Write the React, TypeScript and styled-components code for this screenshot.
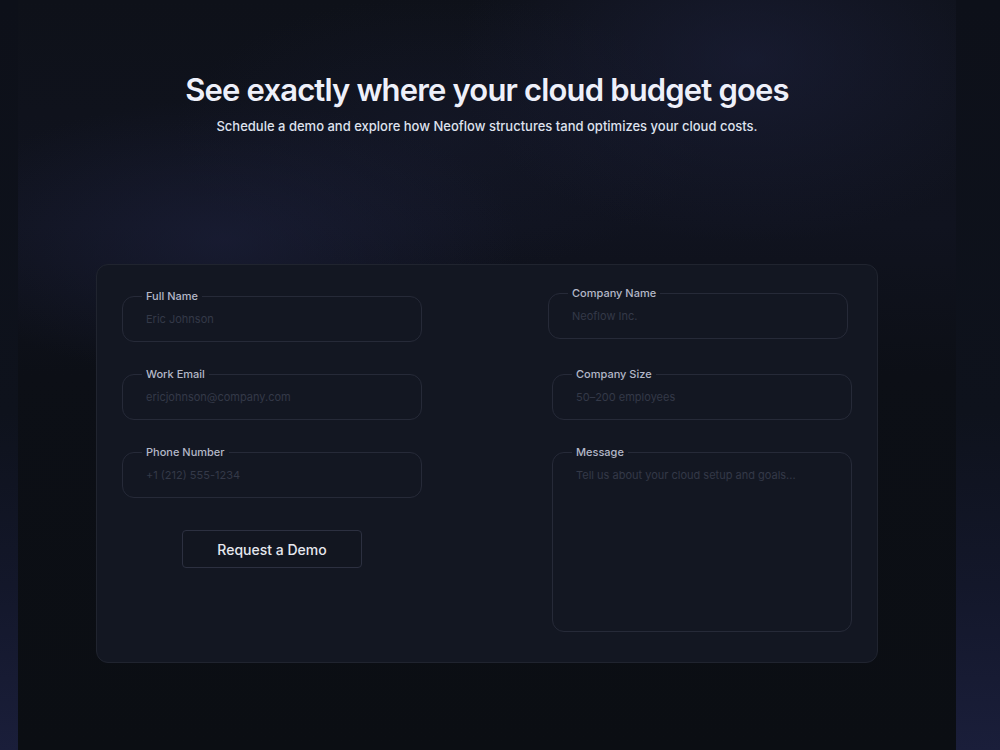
import styled, { createGlobalStyle } from "styled-components";

const GlobalStyle = createGlobalStyle`
  * { box-sizing: border-box; }
  body {
    margin: 0;
    font-family: Inter, "Noto Sans", "Liberation Sans", sans-serif;
    background: linear-gradient(to bottom, #0d1019 0%, #0e121c 55%, #13172a 78%, #1a1e3a 100%);
  }
`;

const Page = styled.div`
  display: flex;
  min-height: 750px;
  padding-left: 18px;
`;

const Column = styled.main`
  width: 938px;
  min-height: 750px;
  display: flex;
  flex-direction: column;
  align-items: center;
  background:
    radial-gradient(ellipse 420px 260px at 78% 8%, rgba(30, 34, 64, 0.55), transparent 70%),
    radial-gradient(ellipse 420px 200px at 22% 32%, rgba(30, 34, 64, 0.55), transparent 70%),
    radial-gradient(ellipse 380px 200px at 45% 18%, rgba(26, 30, 54, 0.35), transparent 70%),
    linear-gradient(to bottom, #0e1119 0%, #10131f 30%, #0c0f16 50%, #0b0e13 100%);
`;

const Title = styled.h1`
  margin: 72px 0 0;
  font-size: 31px;
  line-height: 36px;
  font-weight: 600;
  letter-spacing: -0.027em;
  color: #eef0fa;
`;

const Subtitle = styled.p`
  margin: 9px 0 0;
  font-size: 13px;
  line-height: 18px;
  font-weight: 500;
  color: #dfe2ee;
`;

const Card = styled.form`
  margin-top: 129px;
  width: 782px;
  padding: 24px 25px 30px;
  border: 1px solid #20242f;
  border-radius: 12px;
  background: #131722;
  display: grid;
  grid-template-columns: 300px 300px;
  justify-content: space-between;
`;

const Stack = styled.div`
  display: flex;
  flex-direction: column;
  gap: 25px;
`;

const Field = styled.fieldset<{ $nudge?: boolean }>`
  width: 300px;
  margin: ${(p) => (p.$nudge ? "-3px 4px 3px -4px" : "0")};
  padding: 0 20px 6px 19px;
  border: 1px solid #262a38;
  border-radius: 12px;
  min-width: 0;
`;

const Legend = styled.legend`
  padding: 0 4px;
  font-size: 11px;
  line-height: 14px;
  font-weight: 500;
  color: #b4b8c8;
`;

const Input = styled.input`
  display: block;
  width: 100%;
  height: 32px;
  padding: 0 4px;
  border: none;
  outline: none;
  background: transparent;
  font-family: inherit;
  font-size: 11px;
  color: #d8dbe6;
  &::placeholder { color: #343948; }
`;

const TextArea = styled.textarea`
  display: block;
  width: 100%;
  height: 166px;
  padding: 9px 4px 0;
  border: none;
  outline: none;
  resize: none;
  background: transparent;
  font-family: inherit;
  font-size: 11px;
  line-height: 14px;
  color: #d8dbe6;
  &::placeholder { color: #343948; }
`;

const Button = styled.button`
  align-self: center;
  margin-top: 7px;
  width: 180px;
  height: 38px;
  border: 1px solid #2c3040;
  border-radius: 4px;
  background: #121620;
  font-family: inherit;
  font-size: 14px;
  font-weight: 500;
  color: #e6e8ef;
  cursor: pointer;
`;

const TextField = ({ label, placeholder, nudge }: { label: string; placeholder: string; nudge?: boolean }) => (
  <Field $nudge={nudge}>
    <Legend>{label}</Legend>
    <Input placeholder={placeholder} />
  </Field>
);

export default function App() {
  return (
    <Page>
      <GlobalStyle />
      <Column>
        <Title>See exactly where your cloud budget goes</Title>
        <Subtitle>Schedule a demo and explore how Neoflow structures tand optimizes your cloud costs.</Subtitle>
        <Card onSubmit={(e) => e.preventDefault()}>
          <Stack>
            <TextField label="Full Name" placeholder="Eric Johnson" />
            <TextField label="Work Email" placeholder="ericjohnson@company.com" />
            <TextField label="Phone Number" placeholder="+1 (212) 555-1234" />
            <Button type="submit">Request a Demo</Button>
          </Stack>
          <Stack>
            <TextField label="Company Name" placeholder="Neoflow Inc." nudge />
            <TextField label="Company Size" placeholder="50–200 employees" />
            <Field>
              <Legend>Message</Legend>
              <TextArea placeholder="Tell us about your cloud setup and goals..." />
            </Field>
          </Stack>
        </Card>
      </Column>
    </Page>
  );
}
